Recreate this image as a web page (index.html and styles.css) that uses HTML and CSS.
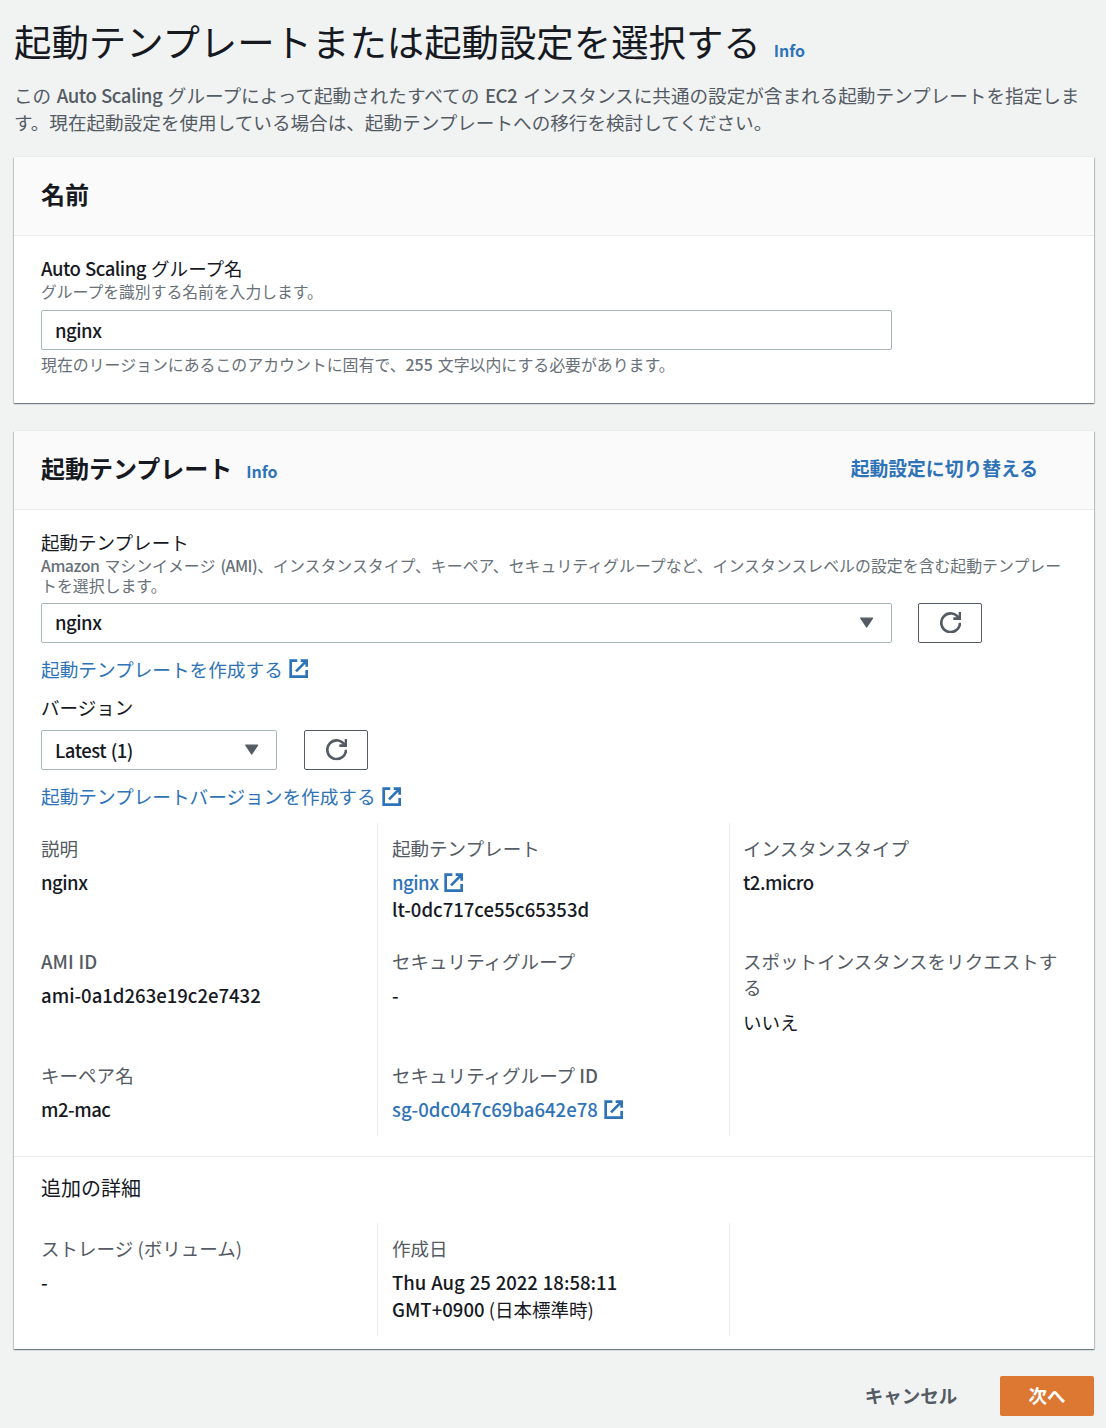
FILE: index.html
```html
<!DOCTYPE html>
<html lang="ja">
<head>
  <meta charset="UTF-8" />
  <meta name="viewport" content="width=device-width, initial-scale=1.0">
  <title>起動テンプレートまたは起動設定を選択する</title>
  <link rel="stylesheet" href="styles.css">
</head>
<body>

  <svg class="icon-defs" aria-hidden="true">
    <symbol id="icon-external" viewBox="0 0 16 16">
      <path d="M9.5 2H14v4.5M6 10l8-8M14 9v5H2V2h5" />
    </symbol>
    <symbol id="icon-refresh" viewBox="0 0 16 16">
      <path d="M10 5h5V0M15 8a7 7 0 1 1-.7-3" />
    </symbol>
    <symbol id="icon-caret" viewBox="0 0 16 16">
      <path d="M3.6 4.6h8.8L8 11.2z" />
    </symbol>
  </svg>

  <header class="page-header">
    <h1>起動テンプレートまたは起動設定を選択する</h1>
    <a href="#" class="info">Info</a>
  </header>
  <p class="intro">この <span class="en word">Auto Scaling</span> グループによって起動されたすべての <span class="en word">EC2</span> インスタンスに共通の設定が含まれる起動テンプレートを指定します。現在起動設定を使用している場合は、起動テンプレートへの移行を検討してください。</p>

  <section class="card name-card">
    <div class="card-header">
      <h2>名前</h2>
    </div>
    <div class="card-body name-body">
      <label for="groupName"><span class="en word">Auto Scaling</span> グループ名</label>
      <div class="hint">グループを識別する名前を入力します。</div>
      <input type="text" id="groupName" class="field word" value="nginx" />
      <div class="hint hint-below">現在のリージョンにあるこのアカウントに固有で、<span class="en">255</span> 文字以内にする必要があります。</div>
    </div>
  </section>

  <section class="card">
    <div class="card-header template-header">
      <h2>起動テンプレート</h2>
      <a href="#" class="info">Info</a>
      <a href="#" class="switch-link">起動設定に切り替える</a>
    </div>
    <div class="card-body template-body">
      <div class="label">起動テンプレート</div>
      <div class="hint hint-wide"><span class="en word">Amazon</span> マシンイメージ <span class="en word">(AMI)</span>、インスタンスタイプ、キーペア、セキュリティグループなど、インスタンスレベルの設定を含む起動テンプレートを選択します。</div>
      <div class="select-row template-row">
        <div class="field select en word">nginx <svg class="caret"><use href="#icon-caret" /></svg></div>
        <button type="button" class="refresh" aria-label="更新"><svg class="icon"><use href="#icon-refresh" /></svg></button>
      </div>
      <a href="#" class="link create-link"><span>起動テンプレートを作成する</span><svg class="icon"><use href="#icon-external" /></svg></a>

      <div class="label version-label">バージョン</div>
      <div class="select-row">
        <div class="field select select-small en word">Latest (1) <svg class="caret"><use href="#icon-caret" /></svg></div>
        <button type="button" class="refresh" aria-label="更新"><svg class="icon"><use href="#icon-refresh" /></svg></button>
      </div>
      <a href="#" class="link create-link"><span>起動テンプレートバージョンを作成する</span><svg class="icon"><use href="#icon-external" /></svg></a>

      <div class="details">
        <div class="item">
          <div class="key">説明</div>
          <div class="en word">nginx</div>
        </div>
        <div class="item">
          <div class="key">起動テンプレート</div>
          <a href="#" class="link"><span class="en word">nginx</span><svg class="icon"><use href="#icon-external" /></svg></a>
          <div class="en">lt-0dc717ce55c65353d</div>
        </div>
        <div class="item">
          <div class="key">インスタンスタイプ</div>
          <div class="en word">t2.micro</div>
        </div>
        <div class="item">
          <div class="key en">AMI ID</div>
          <div class="en">ami-0a1d263e19c2e7432</div>
        </div>
        <div class="item">
          <div class="key">セキュリティグループ</div>
          <div class="en">-</div>
        </div>
        <div class="item">
          <div class="key">スポットインスタンスをリクエストする</div>
          <div>いいえ</div>
        </div>
        <div class="item">
          <div class="key">キーペア名</div>
          <div class="en word">m2-mac</div>
        </div>
        <div class="item">
          <div class="key">セキュリティグループ <span class="en">ID</span></div>
          <a href="#" class="link"><span class="en">sg-0dc047c69ba642e78</span><svg class="icon"><use href="#icon-external" /></svg></a>
        </div>
        <div class="item"></div>
      </div>
    </div>

    <div class="extra">
      <h3>追加の詳細</h3>
      <div class="details details-single">
        <div class="item">
          <div class="key">ストレージ (ボリューム)</div>
          <div class="en">-</div>
        </div>
        <div class="item">
          <div class="key">作成日</div>
          <div><span class="en">Thu Aug 25 2022 18:58:11<br>GMT+0900</span> (日本標準時)</div>
        </div>
        <div class="item"></div>
      </div>
    </div>
  </section>

  <footer class="form-actions">
    <button type="button" class="btn-cancel">キャンセル</button>
    <button type="button" class="btn-next">次へ</button>
  </footer>

</body>
</html>
```

FILE: styles.css
```css
*, *::before, *::after {
  box-sizing: border-box;
}

body {
  margin: 0;
  padding: 18px 12px 12px 14px;
  background: #f1f3f3;
  color: #16191f;
  font-family: "Noto Sans CJK JP", sans-serif;
  font-size: 18.55px;
  line-height: 26.67px;
}

h1, h2, h3, p {
  margin: 0;
}

a {
  color: #2e73b8;
  text-decoration: none;
}

button, input {
  font: inherit;
  color: inherit;
}

/* latin text is a little heavier than the kana */
.en {
  font-weight: 500;
  word-spacing: 0.7px;
}

.word {
  letter-spacing: -0.5px;
  word-spacing: 1px;
}

.icon-defs {
  display: none;
}

.icon {
  flex: none;
  width: 21.33px;
  height: 21.33px;
  fill: none;
  stroke: currentColor;
  stroke-width: 2;
}

.page-header {
  display: flex;
  align-items: baseline;
  height: 48px;
}

h1 {
  font-size: 37.4px;
  font-weight: 400;
  line-height: 47px;
}

.info {
  margin-left: 14px;
  font-size: 16px;
  font-weight: 700;
}

.page-header .info {
  margin-left: 13px;
  padding-bottom: 2px;
  align-self: flex-end;
  line-height: 28px;
}

.intro {
  margin: 16px 0 22px;
  width: 1070px;
  color: #545b64;
  font-size: 18.6px;
  word-spacing: 1.5px;
}

.card {
  width: 1080px;
  margin-bottom: 27px;
  background: #fff;
  box-shadow: 0 0 1px rgba(0, 28, 36, 0.2), 0 1px 1px rgba(0, 28, 36, 0.35), 1px 1px 1px rgba(0, 28, 36, 0.15), -1px 1px 1px rgba(0, 28, 36, 0.12);
}

.name-card {
  margin-bottom: 28px;
}

.card-header {
  display: flex;
  align-items: baseline;
  height: 79px;
  padding: 19px 56px 0 27px;
  background: #fafafa;
  border-bottom: 1px solid #eaeded;
}

h2 {
  font-size: 24px;
  font-weight: 700;
  line-height: 36px;
}

.switch-link {
  align-self: flex-start;
  margin-left: auto;
  font-size: 18.8px;
  font-weight: 700;
  line-height: 36px;
}

.card-body {
  padding: 20px 27px 27px;
}

.name-body {
  padding-top: 19px;
}

label,
.label {
  display: block;
}

label {
  word-spacing: 1px;
}

.hint {
  font-size: 15.8px;
  line-height: 20px;
  color: #687078;
  word-spacing: 1.5px;
}

.hint-wide {
  font-size: 15.9px;
}

.hint-below {
  margin-top: 5px;
  padding-bottom: 1px;
  font-size: 15.9px;
}

.field {
  display: block;
  width: 851px;
  height: 40px;
  margin-top: 8px;
  padding: 0 14px 2px 13px;
  background: #fff;
  border: 1px solid #aab7b8;
  border-radius: 2px;
  font-weight: 500;
}

.select-row {
  display: flex;
  gap: 27px;
  margin-top: 7px;
}

.template-row {
  gap: 26px;
}

.select {
  display: flex;
  align-items: center;
  justify-content: space-between;
  margin: 0;
  padding-bottom: 0;
}

.select-small {
  width: 236px;
}

.caret {
  width: 21.33px;
  height: 21.33px;
  fill: #545b64;
  stroke: #545b64;
  stroke-width: 1;
  stroke-linejoin: round;
}

.refresh {
  display: flex;
  align-items: center;
  justify-content: center;
  width: 64px;
  height: 40px;
  padding: 0 0 0 1px;
  background: #fff;
  border: 1px solid #545b64;
  border-radius: 2px;
  color: #545b64;
}

.link {
  display: flex;
  align-items: center;
  gap: 5px;
}

.template-body {
  padding-top: 19px;
  padding-bottom: 20px;
}

.create-link {
  margin-top: 13px;
  font-size: 18.65px;
}

.version-label {
  margin: 12px 0 9px;
}

.details {
  display: grid;
  grid-template-columns: 336px 352px 338px;
  grid-template-rows: 113px 114px 86px;
  margin-top: 13px;
}

.item {
  padding-top: 12px;
}

.item:not(:nth-child(3n + 1)) {
  padding-left: 14px;
  border-left: 1px solid #eaeded;
}

.item:nth-child(3n) {
  padding-left: 13px;
}

.key {
  margin-bottom: 8px;
  color: #545b64;
}

.details-single {
  grid-template-rows: 113px;
  margin-top: 22px;
}

.details-single .key {
  margin-bottom: 7px;
}

.extra {
  padding: 18px 27px 13px;
  border-top: 1px solid #eaeded;
}

h3 {
  font-size: 20px;
  font-weight: 400;
}

.form-actions {
  display: flex;
  justify-content: flex-end;
  width: 1080px;
}

.btn-cancel,
.btn-next {
  height: 40px;
  padding: 0 0 2px;
  border: none;
  border-radius: 2px;
  font-weight: 700;
}

.btn-cancel {
  width: 178px;
  background: none;
  color: #545b64;
}

.btn-next {
  width: 94px;
  background: #dd7832;
  color: #fff;
}
```
